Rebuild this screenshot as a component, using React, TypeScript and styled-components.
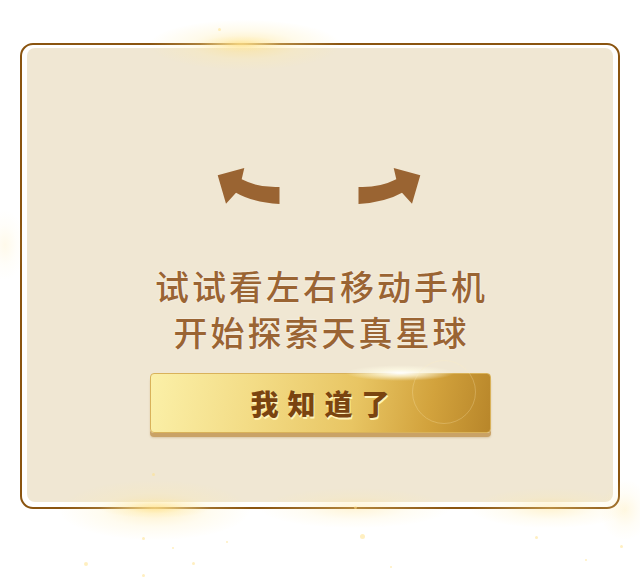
import React from "react";
import styled, { createGlobalStyle } from "styled-components";

const GlobalStyle = createGlobalStyle`
  html, body { margin: 0; padding: 0; background: #ffffff; }
  body { font-family: "Noto Sans CJK SC", "Noto Sans", sans-serif; }
  * { box-sizing: border-box; }
`;

const Page = styled.div`
  position: relative;
  width: 640px;
  height: 584px;
  padding: 43px 0 0 20px;
  overflow: hidden;
  background: #ffffff;
`;

const Frame = styled.div`
  position: relative;
  width: 600px;
  height: 466px;
  border: 2px solid #8a5410;
  border-radius: 13px;
  padding: 3px 5px 5px;
  background: #ffffff;
`;

const Panel = styled.div`
  height: 100%;
  border-radius: 8px;
  background: #f0e7d3;
  display: flex;
  flex-direction: column;
  align-items: center;
  padding-top: 119px;
`;

const ArrowRow = styled.div`
  display: flex;
  gap: 78px;
  margin-right: 2px;
`;

const ArrowSvg = styled.svg<{ $flip?: boolean }>`
  display: block;
  width: 63px;
  height: 38px;
  transform: ${(p) => (p.$flip ? "scaleX(-1)" : "none")};
`;

const Message = styled.div`
  margin-top: 58px;
  color: #9a6433;
  font-size: 34px;
  font-weight: 500;
  line-height: 46px;
  letter-spacing: 3px;
  padding-left: 3px;
  text-align: center;
  text-shadow: 0 0 2px rgba(255, 255, 255, 0.9);
`;

const Line = styled.div``;

const Button = styled.button`
  position: relative;
  margin-top: 18px;
  width: 341px;
  height: 60px;
  border: 1px solid #d9b25a;
  border-radius: 4px;
  background: linear-gradient(100deg, #fbf0a8 0%, #f3dc86 30%, #e8c563 60%, #d2a23c 82%, #b8862a 100%);
  box-shadow: 0 4px 0 #c9a266, 0 5px 2px rgba(160, 110, 40, 0.25);
  color: #7a4410;
  font-family: "Noto Sans CJK SC", "Noto Sans", sans-serif;
  font-size: 28px;
  font-weight: 900;
  letter-spacing: 9px;
  padding: 0 0 0 9px;
  text-shadow: 1px 2px 0 #fff3b8;
  cursor: pointer;
  overflow: visible;
`;

const Glow = styled.div<{ $w: number; $h: number; $o: number }>`
  position: absolute;
  width: ${(p) => p.$w}px;
  height: ${(p) => p.$h}px;
  border-radius: 50%;
  background: radial-gradient(ellipse at center, rgba(255, 226, 140, ${(p) => p.$o}) 0%, rgba(255, 236, 170, ${(p) => p.$o * 0.4}) 40%, rgba(255, 240, 190, 0) 72%);
  pointer-events: none;
`;

const Flare = styled.div`
  position: absolute;
  width: 110px;
  height: 16px;
  border-radius: 50%;
  background: radial-gradient(ellipse at center, rgba(255, 255, 255, 1) 0%, rgba(255, 252, 230, 0.7) 30%, rgba(255, 250, 220, 0) 70%);
  pointer-events: none;
`;

const Ring = styled.div`
  position: absolute;
  width: 64px;
  height: 64px;
  border-radius: 50%;
  border: 1px solid rgba(255, 240, 190, 0.25);
  pointer-events: none;
`;

const Dot = styled.div<{ $s: number }>`
  position: absolute;
  width: ${(p) => p.$s}px;
  height: ${(p) => p.$s}px;
  border-radius: 50%;
  background: rgba(255, 225, 140, 0.55);
  pointer-events: none;
`;

const Arrow = ({ flip }: { flip?: boolean }) => (
  <ArrowSvg viewBox="0 0 63 38" $flip={flip}>
    <path
      d="M27.3,1 L0.7,8.3 L9,36.7 L19,25.7 Q35,35 62.5,37 L62.5,20 Q42,21 24.7,12.3 Z"
      fill="#9a6432"
    />
  </ArrowSvg>
);

const glows = [
  { x: 150, y: 20, w: 190, h: 50, o: 0.6 },
  { x: 200, y: 36, w: 80, h: 16, o: 0.7 },
  { x: 60, y: 480, w: 190, h: 60, o: 0.45 },
  { x: 100, y: 498, w: 110, h: 20, o: 0.7 },
  { x: 260, y: 488, w: 190, h: 40, o: 0.35 },
  { x: 470, y: 488, w: 160, h: 40, o: 0.4 },
  { x: -15, y: 210, w: 40, h: 70, o: 0.18 },
  { x: 600, y: 480, w: 50, h: 60, o: 0.25 },
];

const dots = [
  { x: 142, y: 537, s: 3 }, { x: 84, y: 562, s: 4 }, { x: 152, y: 473, s: 3 },
  { x: 192, y: 562, s: 3 }, { x: 226, y: 541, s: 2 }, { x: 360, y: 534, s: 5 },
  { x: 535, y: 536, s: 3 }, { x: 620, y: 545, s: 3 }, { x: 585, y: 559, s: 2 },
  { x: 142, y: 574, s: 3 }, { x: 390, y: 566, s: 2 }, { x: 218, y: 28, s: 3 },
  { x: 172, y: 547, s: 2 }, { x: 354, y: 506, s: 3 },
];

export default function App() {
  return (
    <>
      <GlobalStyle />
      <Page>
        <Frame>
          <Panel>
            <ArrowRow>
              <Arrow />
              <Arrow flip />
            </ArrowRow>
            <Message>
              <Line>试试看左右移动手机</Line>
              <Line>开始探索天真星球</Line>
            </Message>
            <Button>我知道了</Button>
          </Panel>
        </Frame>
        {glows.map((g, i) => (
          <Glow key={i} $w={g.w} $h={g.h} $o={g.o} style={{ left: g.x, top: g.y }} />
        ))}
        {dots.map((d, i) => (
          <Dot key={i} $s={d.s} style={{ left: d.x, top: d.y }} />
        ))}
        <Flare style={{ left: 345, top: 365 }} />
        <Ring style={{ left: 412, top: 360 }} />
      </Page>
    </>
  );
}
